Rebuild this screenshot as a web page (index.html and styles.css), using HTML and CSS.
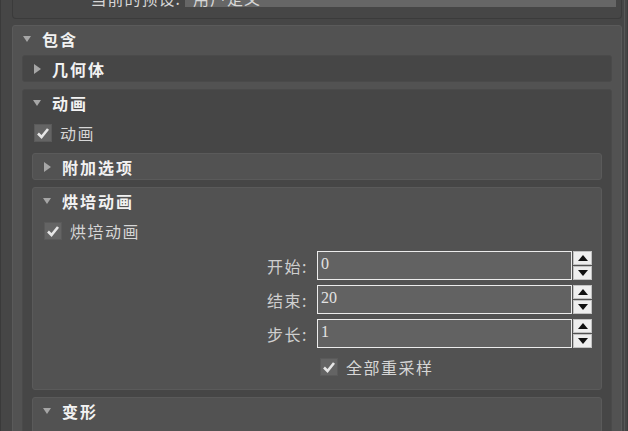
FILE: index.html
```html
<!DOCTYPE html>
<html lang="zh-CN">
<head>
	<meta charset="UTF-8">
	<title>导出设置</title>
	<link rel="stylesheet" href="styles.css">
</head>
<body>

<div class="window">
	<div class="content">

		<div class="preset-panel">
			<span class="preset-label">当前的预设:</span>
			<div class="preset-field">用户定义</div>
		</div>

		<div class="group light">
			<div class="group-head"><span class="arrow down"></span>包含</div>
			<div class="group-body">

				<div class="group dark">
					<div class="group-head"><span class="arrow right"></span>几何体</div>
				</div>

				<div class="group dark">
					<div class="group-head"><span class="arrow down"></span>动画</div>
					<div class="group-body">

						<div class="check">
							<span class="box"><svg width="18" height="18" viewBox="0 0 18 18"><path d="M4 9.5 L7.5 13 L14 5" fill="none" stroke="#e6e6e6" stroke-width="2.6"/></svg></span>
							<span>动画</span>
						</div>

						<div class="group light">
							<div class="group-head"><span class="arrow right"></span>附加选项</div>
						</div>

						<div class="group light">
							<div class="group-head"><span class="arrow down"></span>烘培动画</div>
							<div class="group-body">

								<div class="check">
									<span class="box"><svg width="18" height="18" viewBox="0 0 18 18"><path d="M4 9.5 L7.5 13 L14 5" fill="none" stroke="#e6e6e6" stroke-width="2.6"/></svg></span>
									<span>烘培动画</span>
								</div>

								<div class="fields">
									<div class="field-row">
										<span class="field-label">开始:</span>
										<div class="field">0</div>
										<div class="spinner"><span class="spin up"></span><span class="spin dn"></span></div>
									</div>
									<div class="field-row">
										<span class="field-label">结束:</span>
										<div class="field">20</div>
										<div class="spinner"><span class="spin up"></span><span class="spin dn"></span></div>
									</div>
									<div class="field-row">
										<span class="field-label">步长:</span>
										<div class="field">1</div>
										<div class="spinner"><span class="spin up"></span><span class="spin dn"></span></div>
									</div>
								</div>

								<div class="check resample">
									<span class="box"><svg width="18" height="18" viewBox="0 0 18 18"><path d="M4 9.5 L7.5 13 L14 5" fill="none" stroke="#e6e6e6" stroke-width="2.6"/></svg></span>
									<span>全部重采样</span>
								</div>

							</div>
						</div>

						<div class="group light">
							<div class="group-head"><span class="arrow down"></span>变形</div>
							<div class="group-body tall"></div>
						</div>

					</div>
				</div>

			</div>
		</div>

	</div>
	<div class="edge"></div>
</div>

</body>
</html>
```

FILE: styles.css
```css
html, body {
	margin: 0;
	width: 628px;
	height: 431px;
	overflow: hidden;
	background: #454545;
	font-family: "Noto Sans CJK SC", "Liberation Sans", sans-serif;
	font-size: 16px;
	color: #d6d6d6;
}

.window {
	display: flex;
	height: 431px;
	border-left: 1px solid #3a3a3a;
	background: #464646;
}

.content {
	width: 610px;
	margin-left: 11px;
	display: flex;
	flex-direction: column;
	gap: 6px;
}

.content > *,
.group-body > *,
.group > * {
	flex-shrink: 0;
}

.edge {
	width: 2px;
	margin-left: 2px;
	border-left: 1px solid #575757;
	border-right: 1px solid #3e3e3e;
}

/* preset bar, mostly scrolled off the top */
.preset-panel {
	height: 29px;
	margin-top: -11px;
	display: flex;
	align-items: flex-start;
	padding: 0 5px 0 0;
	background: #464646;
	border: 1px solid #3b3b3b;
	border-top: 0;
	border-radius: 0 0 4px 4px;
}

.preset-label {
	width: 168px;
	text-align: right;
	line-height: 18px;
	letter-spacing: 1px;
}

.preset-field {
	flex: 1;
	height: 18px;
	margin-left: 4px;
	background: #666;
	line-height: 18px;
	padding-left: 8px;
	letter-spacing: 1px;
}

/* collapsible groups */
.group {
	border: 1px solid #4b4b4b;
	border-radius: 3px;
}

.group.light {
	background: #525252;
	border-color: #5a5a5a;
}

.group.dark {
	background: #464646;
	border-color: #4a4a4a;
}

.group-head {
	height: 25px;
	display: flex;
	align-items: center;
	padding-left: 9px;
	font-weight: bold;
	color: #f2f2f2;
	letter-spacing: 2px;
}

.arrow {
	width: 10px;
	height: 10px;
	margin-right: 10px;
	display: flex;
	align-items: center;
	justify-content: center;
}

.arrow.down::before {
	content: "";
	border-left: 4.5px solid transparent;
	border-right: 4.5px solid transparent;
	border-top: 6px solid #a6a6a6;
}

.arrow.right::before {
	content: "";
	border-top: 5px solid transparent;
	border-bottom: 5px solid transparent;
	border-left: 7px solid #a6a6a6;
}

.group-body {
	display: flex;
	flex-direction: column;
	gap: 7px;
	padding: 4px 9px 10px 9px;
}

.group-body.tall {
	height: 40px;
}

/* checkboxes */
.check {
	height: 27px;
	display: flex;
	align-items: center;
	gap: 8px;
	padding-left: 2px;
	letter-spacing: 1.5px;
}

.check.resample {
	height: 24px;
	padding-left: 278px;
}

.box {
	width: 18px;
	height: 18px;
	box-sizing: border-box;
	background: #646464;
	border: 1px solid #5a5a5a;
	display: flex;
	align-items: center;
	justify-content: center;
}

.box svg {
	flex: none;
}

/* number fields */
.fields {
	display: flex;
	flex-direction: column;
	gap: 5px;
}

.field-row {
	height: 29px;
	display: flex;
	justify-content: flex-end;
	align-items: stretch;
}

.field-label {
	align-self: center;
	margin-right: 9px;
	letter-spacing: 1.5px;
	color: #cfcfcf;
}

.field {
	width: 255px;
	box-sizing: border-box;
	background: #626262;
	border: 1px solid #ececec;
	font-family: "Liberation Serif", serif;
	font-size: 16px;
	color: #e2e2e2;
	padding: 2px 0 0 3px;
	line-height: 20px;
}

.spinner {
	width: 19px;
	margin-left: 1px;
	display: flex;
	flex-direction: column;
	gap: 1px;
}

.spin {
	flex: 1;
	background: #eeeeee;
	border: 1px solid #c2c2c2;
	display: flex;
	align-items: center;
	justify-content: center;
}

.spin.up::before {
	content: "";
	border-left: 5px solid transparent;
	border-right: 5px solid transparent;
	border-bottom: 6px solid #111;
}

.spin.dn::before {
	content: "";
	border-left: 5px solid transparent;
	border-right: 5px solid transparent;
	border-top: 6px solid #111;
}
```
